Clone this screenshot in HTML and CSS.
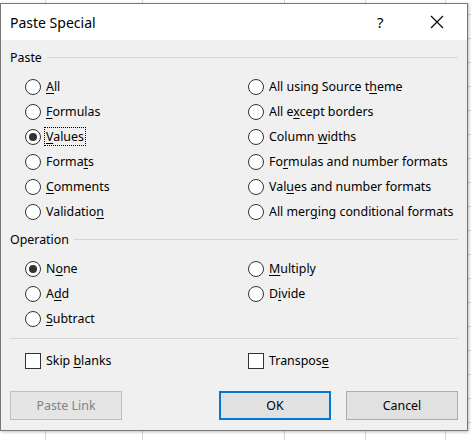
FILE: index.html
```html
<!DOCTYPE html>
<html>
<head>
<meta charset="utf-8">
<link rel="stylesheet" href="styles.css">
</head>
<body>
<div class="dialog">
  <div class="titlebar">
    <span class="title">Paste Special</span>
    <span class="help">?</span>
    <svg class="close" width="14" height="14" viewBox="0 0 14 14"><path d="M1 1L13 13M13 1L1 13" stroke="#000" stroke-width="1.1" fill="none"/></svg>
  </div>
  <div class="body">
    <div class="group-head"><span>Paste</span><span class="rule"></span></div>
    <div class="options paste">
      <label class="opt"><span class="radio"></span><span class="txt"><u>A</u>ll</span></label>
      <label class="opt"><span class="radio"></span><span class="txt">All using Source t<u>h</u>eme</span></label>
      <label class="opt"><span class="radio"></span><span class="txt"><u>F</u>ormulas</span></label>
      <label class="opt"><span class="radio"></span><span class="txt">All e<u>x</u>cept borders</span></label>
      <label class="opt"><span class="radio on"></span><span class="txt focus"><u>V</u>alues</span></label>
      <label class="opt"><span class="radio"></span><span class="txt">Column <u>w</u>idths</span></label>
      <label class="opt"><span class="radio"></span><span class="txt">Forma<u>t</u>s</span></label>
      <label class="opt"><span class="radio"></span><span class="txt">Fo<u>r</u>mulas and number formats</span></label>
      <label class="opt"><span class="radio"></span><span class="txt"><u>C</u>omments</span></label>
      <label class="opt"><span class="radio"></span><span class="txt">Val<u>u</u>es and number formats</span></label>
      <label class="opt"><span class="radio"></span><span class="txt">Validatio<u>n</u></span></label>
      <label class="opt"><span class="radio"></span><span class="txt">All mer<u>g</u>ing conditional formats</span></label>
    </div>
    <div class="group-head op"><span>Operation</span><span class="rule"></span></div>
    <div class="options operation">
      <label class="opt"><span class="radio on"></span><span class="txt">N<u>o</u>ne</span></label>
      <label class="opt"><span class="radio"></span><span class="txt"><u>M</u>ultiply</span></label>
      <label class="opt"><span class="radio"></span><span class="txt">A<u>d</u>d</span></label>
      <label class="opt"><span class="radio"></span><span class="txt">D<u>i</u>vide</span></label>
      <label class="opt"><span class="radio"></span><span class="txt"><u>S</u>ubtract</span></label>
    </div>
    <div class="sep"></div>
    <div class="options checks">
      <label class="opt"><span class="check"></span><span class="txt">Skip <u>b</u>lanks</span></label>
      <label class="opt"><span class="check"></span><span class="txt">Transpos<u>e</u></span></label>
    </div>
    <div class="buttons">
      <button class="btn disabled">Paste Link</button>
      <div class="right">
        <button class="btn default">OK</button>
        <button class="btn">Cancel</button>
      </div>
    </div>
  </div>
</div>
</body>
</html>
```

FILE: styles.css
```css
html, body {
  margin: 0;
  padding: 0;
}
body {
  width: 471px;
  height: 440px;
  position: relative;
  overflow: hidden;
  font-family: "Noto Sans", "Open Sans", sans-serif;
  background-color: #fff;
  background-image:
    linear-gradient(to right,
      transparent 45px, #d6d6d6 45px, #d6d6d6 46px, transparent 46px,
      transparent 142px, #d6d6d6 142px, #d6d6d6 143px, transparent 143px,
      transparent 284px, #d6d6d6 284px, #d6d6d6 285px, transparent 285px,
      transparent 365px, #d6d6d6 365px, #d6d6d6 366px, transparent 366px,
      transparent 445px, #d6d6d6 445px, #d6d6d6 446px, transparent 446px),
    repeating-linear-gradient(to bottom,
      transparent 0, transparent 14px, #d6d6d6 14px, #d6d6d6 15px, transparent 15px, transparent 24px);
}
.dialog {
  position: absolute;
  left: 0;
  top: 3px;
  width: 466px;
  height: 426px;
  border: 1px solid #777;
  background: #f0f0f0;
  box-shadow: 1px 1px 3px rgba(0,0,0,0.25);
  color: #000;
  font-size: 12.4px;
}
.titlebar {
  height: 36px;
  background: #fff;
  display: flex;
  align-items: center;
  padding-left: 9px;
}
.title {
  font-size: 14px;
  flex: 1;
}
.help {
  font-size: 15px;
  width: 12px;
  margin-right: 41px;
}
.close {
  margin-right: 23px;
}
.body {
  padding: 0 9px;
}
.group-head {
  margin-top: 10px;
  height: 16px;
  display: flex;
  align-items: center;
  line-height: 16px;
}
.group-head .rule {
  flex: 1;
  height: 1px;
  background: #d5d5d5;
  margin-left: 5px;
  margin-top: -1px;
}
.group-head.op {
  margin-top: 8px;
}
.options {
  display: grid;
  grid-template-columns: 223px 1fr;
  grid-auto-rows: 25px;
  padding-left: 15px;
  margin-top: 8px;
}
.opt {
  display: flex;
  align-items: center;
  white-space: nowrap;
}
.radio {
  width: 14px;
  height: 14px;
  border: 1px solid #333;
  border-radius: 50%;
  background: #fff;
  box-sizing: content-box;
  position: relative;
  flex: none;
}
.radio.on::after {
  content: "";
  position: absolute;
  left: 3px;
  top: 3px;
  width: 8px;
  height: 8px;
  border-radius: 50%;
  background: #333;
}
.check {
  width: 14px;
  height: 14px;
  border: 1px solid #333;
  background: #fff;
  flex: none;
}
.txt {
  margin-left: 3px;
  padding: 1px 1px;
  border: 1px dotted transparent;
  line-height: 15px;
}
.txt.focus {
  border-color: #000;
}
.txt u {
  text-underline-offset: 2px;
}
.sep {
  height: 1px;
  background: #d5d5d5;
  margin-top: 7px;
}
.checks {
  margin-top: 9px;
}
.buttons {
  display: flex;
  justify-content: space-between;
  margin-top: 18px;
}
.right {
  display: flex;
  gap: 15px;
}
.btn {
  width: 112px;
  height: 29px;
  box-sizing: border-box;
  background: #e1e1e1;
  border: 1px solid #adadad;
  font-family: inherit;
  font-size: 12.4px;
  color: #000;
  padding: 0;
}
.btn.default {
  border: 2px solid #0078d7;
}
.btn.disabled {
  color: #838383;
  border-color: #bfbfbf;
  background: #e5e5e5;
}
```
